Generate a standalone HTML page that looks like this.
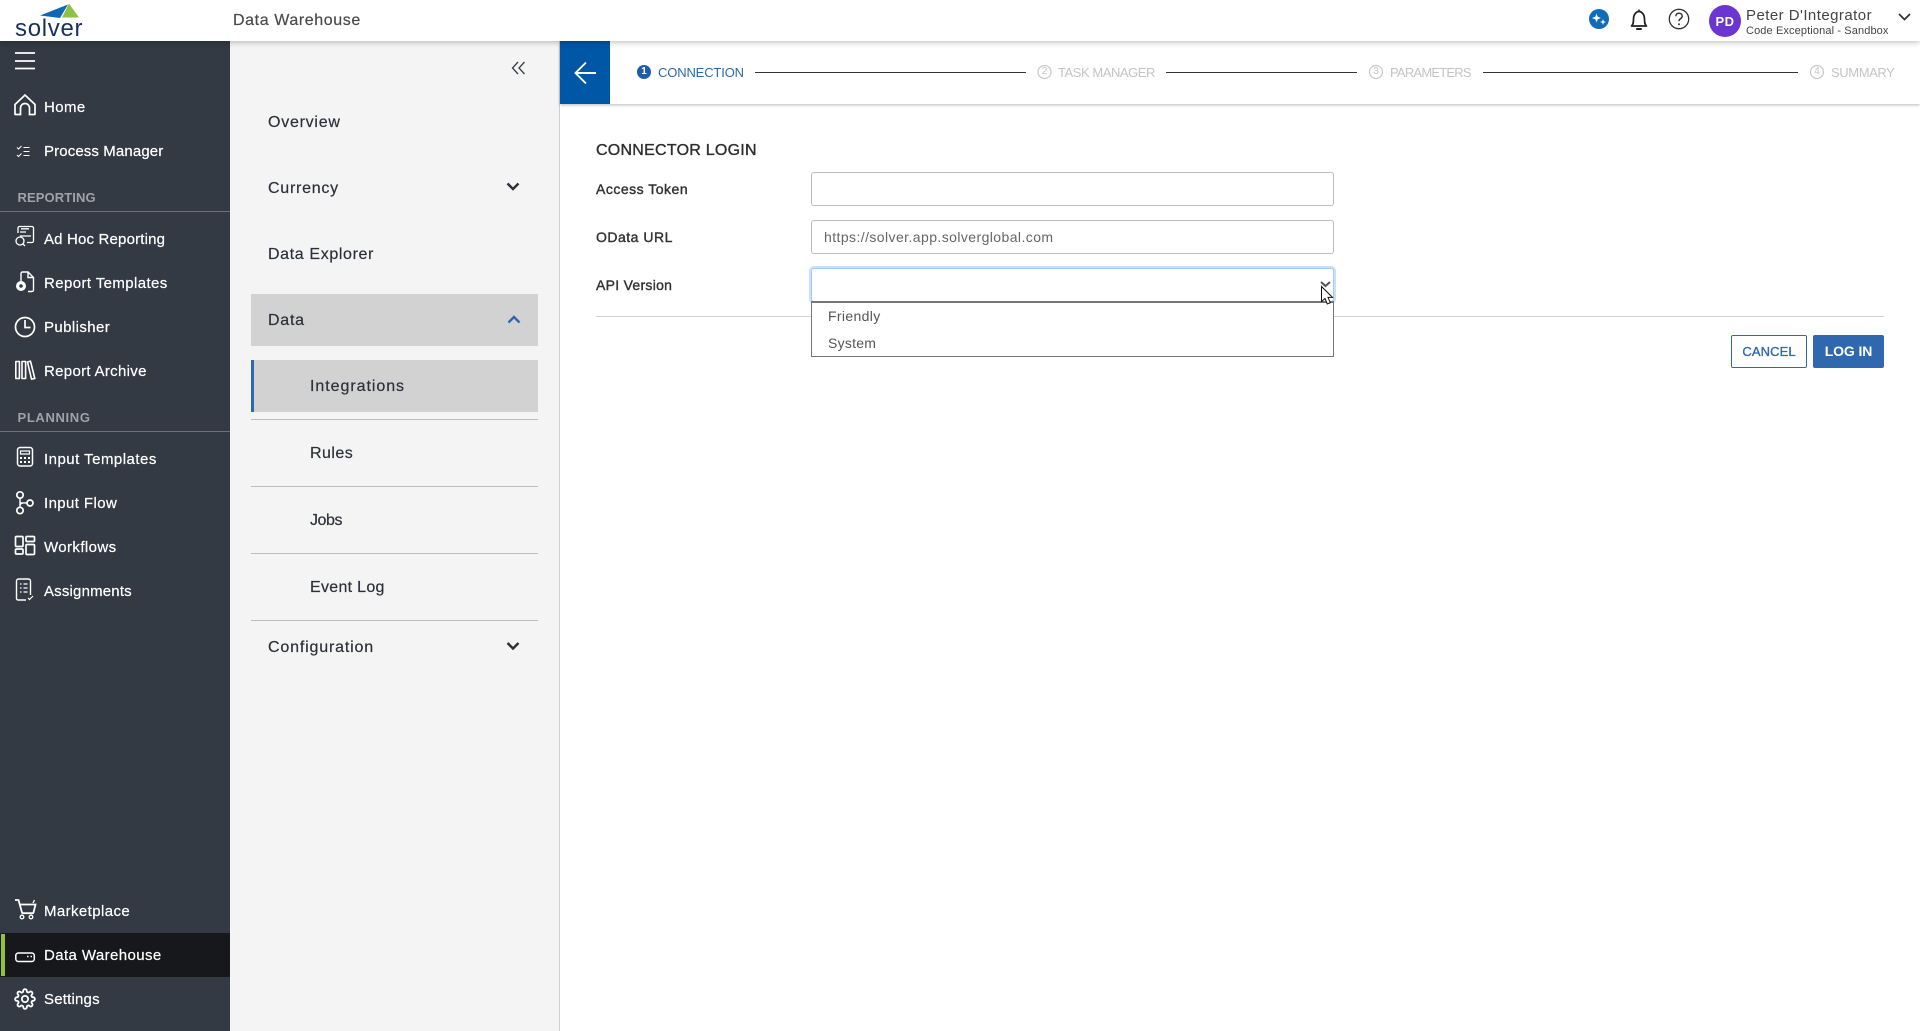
<!DOCTYPE html>
<html lang="en">
<head>
<meta charset="utf-8">
<title>Data Warehouse</title>
<style>
html,body{margin:0;padding:0;width:1920px;height:1031px;overflow:hidden;background:#fff;font-family:"Liberation Sans",sans-serif}
*{box-sizing:border-box}
.t{position:absolute;white-space:nowrap;line-height:20px;height:20px}
.abs{position:absolute}
svg{position:absolute;overflow:visible}
#side{left:0;top:41px;width:230px;height:990px;background:#343a43}
#sub{left:230px;top:41px;width:330px;height:990px;background:#f4f4f4;border-right:1px solid #cfcfcf}
#head{left:0;top:0;width:1920px;height:41px;background:#fff;box-shadow:0 1px 6px rgba(0,0,0,.28);z-index:5}
#step{left:560px;top:41px;width:1360px;height:63px;background:#fff;box-shadow:0 1px 3px rgba(0,0,0,.28);z-index:2}
.n{left:44px;color:#fff;font-size:15px;letter-spacing:.4px;z-index:3;-webkit-text-stroke:.2px #fff}
.h{left:17.500px;color:#9ea3a9;font-size:13px;font-weight:bold;letter-spacing:.1px;z-index:3}
.sl{left:0;width:230px;height:1.5px;background:#6c7178;z-index:3}
.p{color:#2c3038;font-size:16px;letter-spacing:.75px;z-index:3;-webkit-text-stroke:.2px #2c3038}
.d{left:251px;width:287px;height:1px;background:#bdbdbd;z-index:3}
.st{font-size:13px;z-index:4;color:#c4c4c4;letter-spacing:-.05px}
.ln{height:1.5px;background:#333;top:71.5px;z-index:4}
.lb{left:596px;font-size:14px;color:#333;letter-spacing:.5px;-webkit-text-stroke:.4px #333}
.in{left:811px;width:523px;height:34px;border:1px solid #bcbcbc;border-radius:3px;background:#fff}
</style>
</head>
<body>
<div class="abs" id="head"></div>
<div class="abs" id="side"></div>
<div class="abs" id="sub"></div>
<div class="abs" id="step"></div>

<!-- logo -->
<svg style="left:0;top:0;z-index:6" width="100" height="41" viewBox="0 0 100 41">
<path d="M40 15.5 68 4.5 60 18Z" fill="#0f68b4"/>
<path d="M69 3.5 79 17.5H62Z" fill="#8fc045"/>
</svg>
<div class="t" style="left:15px;top:17px;height:24px;line-height:24px;font-size:24px;color:#16315a;letter-spacing:.7px;z-index:6">solver</div>
<div class="t" style="left:233px;top:11px;font-size:16px;color:#4a4a4a;letter-spacing:.6px;z-index:6;-webkit-text-stroke:.2px #4a4a4a">Data Warehouse</div>

<!-- header right -->
<svg style="left:0;top:0;z-index:6" width="1920" height="41" viewBox="0 0 1920 41" fill="none">
<circle cx="1599" cy="19" r="10" fill="#0f6cbd"/>
<path d="M1596.500 13.500l1.200 3.300 3.300 1.200-3.300 1.200-1.200 3.300-1.200-3.300-3.300-1.200 3.300-1.200zM1603 19l.8 2.200 2.200.8-2.200.8-.8 2.200-.8-2.200-2.200-.8 2.200-.8z" fill="#fff"/>
<path d="M1631.500 26c1.800-1.500 2-3.500 2-7 0-4 2.300-7.500 5.500-7.500s5.500 3.500 5.500 7.500c0 3.500.2 5.500 2 7z" stroke="#222" stroke-width="1.700" stroke-linejoin="round"/>
<path d="M1637 29h4" stroke="#222" stroke-width="2" stroke-linecap="round"/>
<path d="M1639 9.500v2" stroke="#222" stroke-width="1.500"/>
<circle cx="1679" cy="19" r="9.700" stroke="#333" stroke-width="1.300"/>
<path d="M1675.800 16.300c0-1.900 1.400-3.100 3.200-3.100s3.200 1.200 3.200 2.900c0 2.600-3.200 2.500-3.200 5" stroke="#333" stroke-width="1.500"/>
<circle cx="1679" cy="24.300" r="1" fill="#333"/>
<circle cx="1725" cy="21" r="16" fill="#6a35d0"/>
<path d="M1899 14l5.500 5.500 5.500-5.500" stroke="#333" stroke-width="1.700"/>
</svg>
<div class="t" style="left:1705px;width:40px;text-align:center;top:12px;font-size:13px;font-weight:bold;color:#fff;letter-spacing:.5px;z-index:6;height:20px">PD</div>
<div class="t" style="left:1746px;top:6px;font-size:15px;color:#444;letter-spacing:.45px;z-index:6">Peter D'Integrator</div>
<div class="t" style="left:1746px;top:21px;font-size:11px;color:#444;letter-spacing:.12px;z-index:6">Code Exceptional - Sandbox</div>

<!-- left nav -->
<svg style="left:0;top:0;z-index:3" width="230" height="1031" viewBox="0 0 230 1031" fill="none" stroke="#fff" stroke-width="1.700">
<path d="M15 53h20M15 61h20M15 68.500h20" stroke-width="1.700"/>
<path d="M15 113.500V104.500l10-9.500 10 9.500v9.500a.5.500 0 0 1-.5.500h-5V108a4.500 4.500 0 0 0-9 0v6.500h-5a.5.500 0 0 1-.5-.5z"/>
<path d="M17 147.500l1.500 1.500 3-3M17 155l1.500 1.500 3-3M23.500 147.500h6M23.500 151.500h6M23.500 155.500h6" stroke-width="1"/>
<path d="M18 233v-5a1.500 1.500 0 0 1 1.500-1.500h12.500a1.500 1.500 0 0 1 1.500 1.500v13a1.500 1.500 0 0 1-1.500 1.500h-5M20 232h6M20 236h11M21 228.800h8" stroke-width="1.300"/>
<circle cx="20" cy="241" r="4" stroke-width="1.300"/><path d="M23 244l2 2" stroke-width="1.300"/>
<path d="M21 281v-7.500a1.500 1.500 0 0 1 1.500-1.500h5.500l5.500 5.500v12.500a1.500 1.500 0 0 1-1.500 1.500h-4M28 272v5.500h5.500" stroke-width="1.400"/>
<circle cx="21" cy="286" r="5" fill="#fff" stroke="none"/>
<circle cx="21" cy="286" r="1.800" fill="#343a43" stroke="none"/>
<circle cx="25" cy="327" r="9.500"/><path d="M25 320v7.500h5.500"/>
<path d="M15.800 361.500h3.600v17h-3.600zM22 361.500h3.600v17h-3.600zM27.500 362l3-.8 4.300 17.300-3.300.6z" stroke-width="1.600" stroke-linejoin="round"/>
<rect x="17.500" y="447.500" width="15" height="18.500" rx="2.500" stroke-width="1.500"/>
<path d="M20.500 451h9v3h-9z" stroke-width="1.200"/>
<path d="M20 458h2M24 458h2M28 458h2M20 462h2M24 462h2M28 462h2" stroke-width="2"/>
<circle cx="20" cy="495" r="3.200"/><circle cx="20" cy="510.500" r="3.200"/><circle cx="30" cy="503" r="3"/>
<path d="M20 498v9.300M20.500 503c1 0 3-.1 6.500 0M20 506c0-2 1-3 3-3" stroke-width="1.400"/>
<rect x="15.500" y="536.500" width="7.500" height="10" rx="1"/><rect x="26" y="536.500" width="8.500" height="5" rx="1"/><rect x="15.500" y="549" width="7.500" height="5" rx="1"/><rect x="26" y="544.500" width="8.500" height="10" rx="1"/>
<path d="M30.500 595V581a2 2 0 0 0-2-2H18.500a2 2 0 0 0-2 2v17.500a1.500 1.500 0 0 0 1.500 1.500h8" stroke-width="1.400"/>
<path d="M20 584h1.500M23.500 584h4M20 588h1.500M23.500 588h4M20 592h1.500M23.500 592h4M28 598l1.500 1.500 3.500-3.500" stroke-width="1.200"/>
<path d="M15 900h3.500l3.500 12.500a1 1 0 0 0 1 .7h9.500a1 1 0 0 0 1-.7l2-8H19.500" stroke-width="1.800"/>
<circle cx="22" cy="917" r="1.800" stroke-width="1.300"/><circle cx="31" cy="917" r="1.800" stroke-width="1.300"/>
<path d="M33 903l1.500-3" stroke-width="1.300"/>
</svg>
<div class="abs" style="left:0;top:933px;width:230px;height:44px;background:#16181c;z-index:2"></div>
<div class="abs" style="left:1px;top:934px;width:4px;height:42px;background:#93c13e;z-index:3"></div>
<svg style="left:0;top:0;z-index:3" width="230" height="1031" viewBox="0 0 230 1031" fill="none" stroke="#fff" stroke-width="1.500">
<rect x="15.800" y="953" width="18.500" height="8.500" rx="2.500"/>
<path d="M27 956.500h1.500M30.500 956.500h1.500" stroke-width="1.500"/>
<g transform="translate(14.200 988.200) scale(.9)"><path stroke-width="2" d="M19.400 15a1.650 1.650 0 0 0 .33 1.820l.06.06a2 2 0 0 1 0 2.830 2 2 0 0 1-2.830 0l-.06-.06a1.650 1.650 0 0 0-1.820-.33 1.650 1.650 0 0 0-1 1.510V21a2 2 0 0 1-2 2 2 2 0 0 1-2-2v-.09A1.650 1.650 0 0 0 9 19.400a1.650 1.650 0 0 0-1.820.33l-.06.06a2 2 0 0 1-2.830 0 2 2 0 0 1 0-2.830l.06-.06a1.650 1.650 0 0 0 .33-1.820 1.650 1.650 0 0 0-1.510-1H3a2 2 0 0 1-2-2 2 2 0 0 1 2-2h.09A1.650 1.650 0 0 0 4.600 9a1.650 1.650 0 0 0-.33-1.820l-.06-.06a2 2 0 0 1 0-2.830 2 2 0 0 1 2.830 0l.06.06a1.650 1.650 0 0 0 1.820.33H9a1.650 1.650 0 0 0 1-1.510V3a2 2 0 0 1 2-2 2 2 0 0 1 2 2v.09a1.650 1.650 0 0 0 1 1.510 1.650 1.650 0 0 0 1.820-.33l.06-.06a2 2 0 0 1 2.830 0 2 2 0 0 1 0 2.830l-.06.06a1.650 1.650 0 0 0-.33 1.820V9a1.650 1.650 0 0 0 1.510 1H21a2 2 0 0 1 2 2 2 2 0 0 1-2 2h-.09a1.650 1.650 0 0 0-1.510 1z"/><circle cx="12" cy="12" r="3.500" stroke-width="2"/></g>
</svg>

<div class="t n" style="top:98px">Home</div>
<div class="t n" style="top:142px;letter-spacing:.12px">Process Manager</div>
<div class="t h" style="top:188px">REPORTING</div>
<div class="abs sl" style="top:210.500px"></div>
<div class="t n" style="top:230px;letter-spacing:.17px">Ad Hoc Reporting</div>
<div class="t n" style="top:274px">Report Templates</div>
<div class="t n" style="top:318px">Publisher</div>
<div class="t n" style="top:362px;letter-spacing:.31px">Report Archive</div>
<div class="t h" style="top:408px;letter-spacing:.65px">PLANNING</div>
<div class="abs sl" style="top:430.500px"></div>
<div class="t n" style="top:450px;letter-spacing:.48px">Input Templates</div>
<div class="t n" style="top:494px">Input Flow</div>
<div class="t n" style="top:538px">Workflows</div>
<div class="t n" style="top:582px;letter-spacing:.18px">Assignments</div>
<div class="t n" style="top:902px">Marketplace</div>
<div class="t n" style="top:946px">Data Warehouse</div>
<div class="t n" style="top:990px;letter-spacing:.2px">Settings</div>

<!-- sub nav -->
<div class="abs" style="left:251px;top:294px;width:287px;height:52px;background:#d2d2d2;z-index:2"></div>
<div class="abs" style="left:251px;top:360px;width:287px;height:52px;background:#d2d2d2;border-left:3px solid #2f68ae;z-index:2"></div>
<div class="t p" style="left:268px;top:113px">Overview</div>
<div class="t p" style="left:268px;top:179px">Currency</div>
<div class="t p" style="left:268px;top:245px;letter-spacing:.63px">Data Explorer</div>
<div class="t p" style="left:268px;top:311px">Data</div>
<div class="t p" style="left:310px;top:377px;letter-spacing:.95px">Integrations</div>
<div class="abs d" style="top:419px"></div>
<div class="t p" style="left:310px;top:444px;letter-spacing:.45px">Rules</div>
<div class="abs d" style="top:486px"></div>
<div class="t p" style="left:310px;top:511px;letter-spacing:-.45px">Jobs</div>
<div class="abs d" style="top:553px"></div>
<div class="t p" style="left:310px;top:578px;letter-spacing:.3px">Event Log</div>
<div class="abs d" style="top:620px"></div>
<div class="t p" style="left:268px;top:638px;letter-spacing:.83px">Configuration</div>
<svg style="left:0;top:0;z-index:3" width="600" height="700" viewBox="0 0 600 700" fill="none">
<path d="M518 62l-5.500 6 5.500 6M524.500 62l-5.500 6 5.500 6" stroke="#3a4048" stroke-width="1.300"/>
<path d="M507.500 183.500l5.500 5.500 5.500-5.500" stroke="#2c3038" stroke-width="2.400"/>
<path d="M508.500 322.500l5.500-5.500 5.500 5.500" stroke="#2f68ae" stroke-width="2.400"/>
<path d="M507.500 643l5.500 5.500 5.500-5.500" stroke="#2c3038" stroke-width="2.400"/>
</svg>

<!-- stepper -->
<div class="abs" style="left:560px;top:41px;width:50px;height:63px;background:#0057a6;z-index:4"></div>
<svg style="left:0;top:0;z-index:4" width="1920" height="110" viewBox="0 0 1920 110" fill="none">
<path d="M596 73h-20M586 62.500l-10.500 10.500 10.500 10.500" stroke="#fff" stroke-width="1.900"/>
<circle cx="644" cy="72" r="7" fill="#1d5ca8"/>
<circle cx="1044.500" cy="72" r="6.500" stroke="#c8c8c8" stroke-width="1.200"/>
<circle cx="1376" cy="72" r="6.500" stroke="#c8c8c8" stroke-width="1.200"/>
<circle cx="1817" cy="72" r="6.500" stroke="#c8c8c8" stroke-width="1.200"/>
</svg>
<div class="t" style="left:637px;width:14px;text-align:center;top:62px;font-size:10px;font-weight:bold;color:#fff;z-index:5">1</div>
<div class="t st" style="left:1037.500px;width:14px;text-align:center;top:62px;font-size:10px">2</div>
<div class="t st" style="left:1369px;width:14px;text-align:center;top:62px;font-size:10px">3</div>
<div class="t st" style="left:1810px;width:14px;text-align:center;top:62px;font-size:10px">4</div>
<div class="t st" style="left:658px;top:62.500px;color:#2f68ae;letter-spacing:-.15px">CONNECTION</div>
<div class="abs ln" style="left:755px;width:271px"></div>
<div class="t st" style="left:1058px;top:62.500px;letter-spacing:-.45px">TASK MANAGER</div>
<div class="abs ln" style="left:1166px;width:191px"></div>
<div class="t st" style="left:1390px;top:62.500px;letter-spacing:-.78px">PARAMETERS</div>
<div class="abs ln" style="left:1483px;width:315px"></div>
<div class="t st" style="left:1831px;top:62.500px;letter-spacing:-.4px">SUMMARY</div>

<!-- form -->
<div class="t" style="left:596px;top:141px;font-size:16px;color:#2c2c2c;letter-spacing:.25px;-webkit-text-stroke:.35px #2c2c2c">CONNECTOR LOGIN</div>
<div class="t lb" style="top:178.500px">Access Token</div>
<div class="t lb" style="top:226.500px">OData URL</div>
<div class="t lb" style="top:274.500px;letter-spacing:.28px">API Version</div>
<div class="abs in" style="top:172px"></div>
<div class="abs in" style="top:220px"></div>
<div class="t" style="left:824px;top:226.500px;font-size:14px;color:#666;letter-spacing:.42px">https://solver.app.solverglobal.com</div>
<div class="abs in" style="top:268px;border-color:#a9c9ec;box-shadow:0 0 0 2px #c7e0fb"></div>
<div class="abs" style="left:596px;top:316px;width:1288px;height:1px;background:#d2d2d2"></div>
<div class="abs" style="left:811px;top:301px;width:523px;height:56px;background:#fff;border:1px solid #767676;border-top:2px solid #767676"></div>
<div class="t" style="left:828px;top:305.500px;font-size:14px;color:#555;letter-spacing:.35px">Friendly</div>
<div class="t" style="left:828px;top:332.500px;font-size:14px;color:#555;letter-spacing:.25px">System</div>
<svg style="left:0;top:0;z-index:7" width="1400" height="320" viewBox="0 0 1400 320" fill="none">
<path d="M1321 282l4.500 4 4.500-4" stroke="#555" stroke-width="2"/>
<path d="M1321.500 286.500v15l3.500-3 2.300 5.500 3-1.300-2.300-5.300h4.500z" fill="#fff" stroke="#111" stroke-width="1"/>
</svg>
<div class="abs" style="left:1731px;top:335px;width:76px;height:33px;border:1px solid #2f68ae;border-radius:2px;background:#fff;color:#2f68ae;font-size:13px;line-height:31px;text-align:center;letter-spacing:.1px;-webkit-text-stroke:.35px #2f68ae">CANCEL</div>
<div class="abs" style="left:1813px;top:335px;width:71px;height:33px;border-radius:2px;background:#2f68ae;color:#fff;font-size:14px;font-weight:bold;line-height:33px;text-align:center;letter-spacing:-.1px">LOG IN</div>
</body>
</html>
